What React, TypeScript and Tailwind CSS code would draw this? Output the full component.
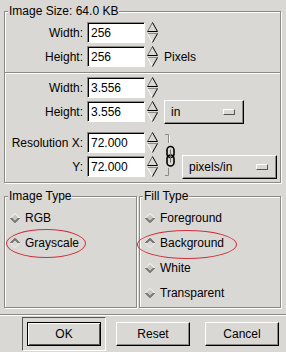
import React from 'react';

// GTK 1.x style "New Image" dialog

const BG = 'bg-[#dad8d4]';

function Frame({ title, className, children }: { title: string; className?: string; children?: React.ReactNode }) {
  return (
    <div
      className={`relative border border-[#8c8a85] shadow-[inset_1px_1px_0_#fff,1px_1px_0_#fff] ${className || ''}`}
    >
      <span className={`absolute -top-[8px] left-[3px] px-[1px] leading-[14px] ${BG}`}>{title}</span>
      {children}
    </div>
  );
}

function Entry({ value }: { value: string }) {
  return (
    <div className="w-[58px] h-[21px] bg-white border border-t-[#8c8a85] border-l-[#8c8a85] border-b-white border-r-white shadow-[inset_1px_1px_0_#000] flex items-center pl-[3px] leading-[14px]">
      {value}
    </div>
  );
}

function Spinner() {
  return (
    <svg width="11" height="21" viewBox="0 0 11 21" className="ml-[2px] shrink-0">
      {/* up */}
      <line x1="0.5" y1="9.5" x2="5.5" y2="0.5" stroke="#6e6c68" />
      <line x1="5.5" y1="0.5" x2="10.5" y2="9.5" stroke="#000" />
      <line x1="0.5" y1="9.5" x2="10.5" y2="9.5" stroke="#000" />
      {/* down */}
      <line x1="0.5" y1="11.5" x2="10.5" y2="11.5" stroke="#8c8a85" />
      <line x1="0.5" y1="11.5" x2="5.5" y2="20.5" stroke="#fff" />
      <line x1="10.5" y1="11.5" x2="5.5" y2="20.5" stroke="#000" />
    </svg>
  );
}

function Row({ label, value, children, className }: { label: string; value: string; children?: React.ReactNode; className?: string }) {
  return (
    <div className={`flex items-center ${className || 'h-[21px]'}`}>
      <div className="w-[78px] text-right leading-[14px]">{label}</div>
      <div className="ml-[4px]">
        <Entry value={value} />
      </div>
      <Spinner />
      {children}
    </div>
  );
}

function OptionMenu({ label, width }: { label: string; width: string }) {
  return (
    <div
      className={`${width} h-[24px] flex items-center justify-between pl-[6px] pr-[8px] border border-t-white border-l-white border-b-black border-r-black shadow-[inset_-1px_-1px_0_#8c8a85] leading-[14px]`}
    >
      <span>{label}</span>
      <span className="w-[12px] h-[6px] border border-t-white border-l-white border-b-[#55544f] border-r-[#55544f]" />
    </div>
  );
}

function Chain() {
  return (
    <svg width="12" height="47" viewBox="0 0 12 47" className="ml-[6px] shrink-0">
      <polyline points="1,2.5 4.5,2.5 4.5,11" fill="none" stroke="#8c8a85" />
      <polyline points="5.5,3.5 5.5,11" fill="none" stroke="#fff" />
      <polyline points="4.5,36 4.5,43.5 1,43.5" fill="none" stroke="#8c8a85" />
      <rect x="3" y="14.5" width="7" height="11" rx="3.5" fill="none" stroke="#000" strokeWidth="1.6" />
      <rect x="3" y="23" width="7" height="11" rx="3.5" fill="none" stroke="#000" strokeWidth="1.6" />
      <line x1="6.5" y1="17.5" x2="6.5" y2="30.5" stroke="#6e6c68" />
    </svg>
  );
}

function Radio({ label, checked }: { label: string; checked?: boolean }) {
  return (
    <div className="h-[25px] flex items-center pl-[5px]">
      <svg width="10" height="10" viewBox="0 0 10 10" className="shrink-0">
        {checked ? (
          <>
            <polyline points="0.5,5 5,0.5 9.5,5" fill="none" stroke="#1e1e1e" />
            <polyline points="1.8,5 5,1.8 8.2,5" fill="none" stroke="#6e6c68" />
            <polyline points="0.5,5 5,9.5 9.5,5" fill="none" stroke="#f2f1ee" />
          </>
        ) : (
          <>
            <polygon points="0.5,5 5,0.5 9.5,5 5,9.5" fill="#c9c7c2" />
            <polyline points="0.5,5 5,0.5 9.5,5" fill="none" stroke="#fff" />
            <polyline points="0.5,5 5,9.5 9.5,5" fill="none" stroke="#2a2a28" />
            <polyline points="1.8,5 5,8.2 8.2,5" fill="none" stroke="#7c7a76" />
          </>
        )}
      </svg>
      <span className="ml-[5px] leading-[14px]">{label}</span>
    </div>
  );
}

function Button({ label, focused }: { label: string; focused?: boolean }) {
  const cls = focused
    ? 'border border-black shadow-[inset_1px_1px_0_#fff,inset_-1px_-1px_0_#55544f]'
    : 'border border-t-white border-l-white border-b-black border-r-black shadow-[inset_-1px_-1px_0_#8c8a85]';
  return (
    <div className={`w-[74px] h-[24px] flex items-center justify-center leading-[14px] ${cls}`}>{label}</div>
  );
}

export default function App() {
  return (
    <div className={`relative w-[286px] h-[352px] overflow-hidden ${BG} font-['Liberation_Sans',Arial,sans-serif] text-[12px] text-black`}>
      <div className="px-[4px] pt-[11px]">
        <Frame title="Image Size: 64.0 KB" className="w-[277px] h-[172px]">
          <div className="pt-[10px]">
            <Row label="Width:" value="256" />
            <Row label="Height:" value="256" className="h-[21px] mt-[3px]">
              <span className="ml-[6px] leading-[14px]">Pixels</span>
            </Row>
            <div className="mt-[5px] h-[2px] border-t border-[#8c8a85] border-b border-b-white" />
            <Row label="Width:" value="3.556" className="h-[21px] mt-[3px]" />
            <Row label="Height:" value="3.556" className="h-[25px] mt-[1px]">
              <div className="ml-[6px]">
                <OptionMenu label="in" width="w-[80px]" />
              </div>
            </Row>
            <div className="mt-[8px] flex items-stretch">
              <div className="flex flex-col">
                <Row label="Resolution X:" value="72.000" />
                <Row label="Y:" value="72.000" className="h-[25px] mt-[1px]" />
              </div>
              <Chain />
              <div className="ml-[6px] flex flex-col justify-end pb-[0.5px]">
                <OptionMenu label="pixels/in" width="w-[95px]" />
              </div>
            </div>
          </div>
        </Frame>

        <div className="mt-[13px] flex gap-[2px]">
          <Frame title="Image Type" className="w-[133px] h-[112px]">
            <div className="pt-[8px]">
              <Radio label="RGB" />
              <Radio label="Grayscale" checked />
            </div>
          </Frame>
          <Frame title="Fill Type" className="w-[142px] h-[112px]">
            <div className="pt-[8px]">
              <Radio label="Foreground" />
              <Radio label="Background" checked />
              <Radio label="White" />
              <Radio label="Transparent" />
            </div>
          </Frame>
        </div>
      </div>

      <div className="mt-[6px] h-[2px] border-t border-[#8c8a85] border-b border-b-white" />

      <div className="mt-[1px] flex items-start pl-[22px]">
        <div className="p-[4px] border border-t-[#55544f] border-l-[#55544f] border-r-white border-b-white">
          <Button label="OK" focused />
        </div>
        <div className="ml-[10px] mt-[5px]">
          <Button label="Reset" />
        </div>
        <div className="ml-[15px] mt-[5px]">
          <Button label="Cancel" />
        </div>
      </div>

      {/* red annotation ellipses */}
      <div className="absolute left-[6px] top-[229px] w-[80px] h-[29px] rounded-[50%] border border-[#d02f3c]" />
      <div className="absolute left-[137px] top-[230px] w-[100px] h-[29px] rounded-[50%] border border-[#d02f3c]" />
    </div>
  );
}
